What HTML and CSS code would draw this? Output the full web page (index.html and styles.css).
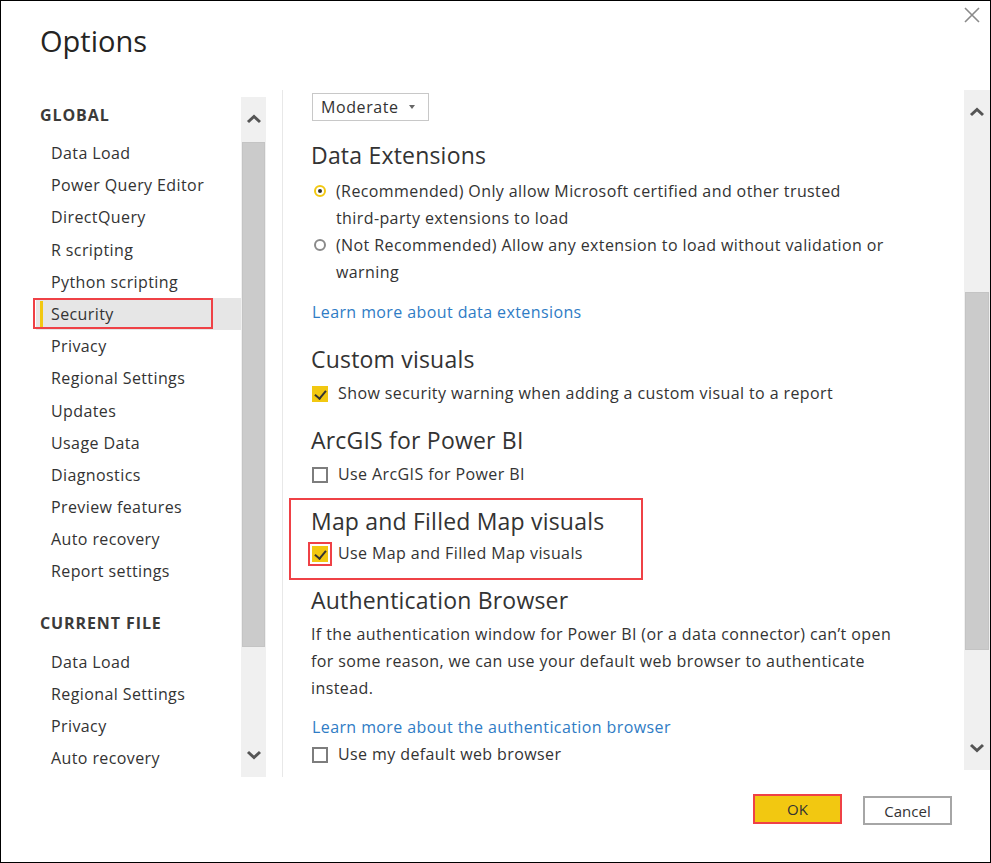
FILE: index.html
```html
<!DOCTYPE html>
<html lang="en">
<head>
<meta charset="utf-8">
<title>Options</title>
<link rel="stylesheet" href="styles.css">
</head>
<body>
<div class="dialog">
  <header class="header">
    <h1 class="title">Options</h1>
    <button class="close" aria-label="Close">
      <svg width="16" height="16" viewBox="0 0 16 16"><path d="M1 1 L15 15 M15 1 L1 15" stroke="#8a8a8a" stroke-width="1.6" fill="none"/></svg>
    </button>
  </header>

  <main class="main">
    <nav class="nav">
      <div class="nav-head first">GLOBAL</div>
      <ul class="nav-list">
        <li class="nav-item">Data Load</li>
        <li class="nav-item">Power Query Editor</li>
        <li class="nav-item">DirectQuery</li>
        <li class="nav-item">R scripting</li>
        <li class="nav-item">Python scripting</li>
        <li class="nav-item active"><span class="annot annot-nav"></span>Security</li>
        <li class="nav-item">Privacy</li>
        <li class="nav-item">Regional Settings</li>
        <li class="nav-item">Updates</li>
        <li class="nav-item">Usage Data</li>
        <li class="nav-item">Diagnostics</li>
        <li class="nav-item">Preview features</li>
        <li class="nav-item">Auto recovery</li>
        <li class="nav-item">Report settings</li>
      </ul>
      <div class="nav-head second">CURRENT FILE</div>
      <ul class="nav-list">
        <li class="nav-item">Data Load</li>
        <li class="nav-item">Regional Settings</li>
        <li class="nav-item">Privacy</li>
        <li class="nav-item">Auto recovery</li>
      </ul>
    </nav>

    <div class="scrollbar scrollbar-left">
      <div class="sb-arrow"><svg width="16" height="10" viewBox="0 0 16 10"><path d="M2 8 L8 2.5 L14 8" stroke="#555" stroke-width="3" fill="none"/></svg></div>
      <div class="sb-track"><div class="sb-thumb thumb-left"></div></div>
      <div class="sb-arrow"><svg width="16" height="10" viewBox="0 0 16 10"><path d="M2 2 L8 7.5 L14 2" stroke="#555" stroke-width="3" fill="none"/></svg></div>
    </div>

    <div class="divider"></div>

    <section class="content">
      <div class="dropdown">Moderate <span class="caret"></span></div>

      <h2 class="heading h-first">Data Extensions</h2>
      <div class="radio-row">
        <span class="radio on"></span>
        <span class="label">(Recommended) Only allow Microsoft certified and other trusted <span class="nowrap">third-party</span> extensions to load</span>
      </div>
      <div class="radio-row">
        <span class="radio"></span>
        <span class="label">(Not Recommended) Allow any extension to load without validation or warning</span>
      </div>
      <a class="link link-ext">Learn more about data extensions</a>

      <h2 class="heading">Custom visuals</h2>
      <div class="check-row"><span class="check on"></span><span class="label">Show security warning when adding a custom visual to a report</span></div>

      <h2 class="heading">ArcGIS for Power BI</h2>
      <div class="check-row"><span class="check"></span><span class="label">Use ArcGIS for Power BI</span></div>

      <div class="map-section">
        <span class="annot annot-map"></span>
        <h2 class="heading">Map and Filled Map visuals</h2>
        <div class="check-row"><span class="check on"><span class="annot annot-check"></span></span><span class="label">Use Map and Filled Map visuals</span></div>
      </div>

      <h2 class="heading">Authentication Browser</h2>
      <p class="para">If the authentication window for Power BI (or a data connector) can’t open for some reason, we can use your default web browser to authenticate instead.</p>
      <a class="link link-auth">Learn more about the authentication browser</a>
      <div class="check-row"><span class="check"></span><span class="label">Use my default web browser</span></div>
    </section>

    <div class="scrollbar scrollbar-right">
      <div class="sb-arrow"><svg width="16" height="10" viewBox="0 0 16 10"><path d="M2 8 L8 2.5 L14 8" stroke="#555" stroke-width="3" fill="none"/></svg></div>
      <div class="sb-track"><div class="sb-thumb thumb-right"></div></div>
      <div class="sb-arrow"><svg width="16" height="10" viewBox="0 0 16 10"><path d="M2 2 L8 7.5 L14 2" stroke="#555" stroke-width="3" fill="none"/></svg></div>
    </div>
  </main>

  <footer class="footer">
    <button class="btn btn-ok">OK</button>
    <button class="btn btn-cancel">Cancel</button>
  </footer>
</div>
</body>
</html>
```

FILE: styles.css
```css
* { box-sizing: border-box; }
html, body { margin: 0; padding: 0; background: #fff; }
body { font-family: "Open Sans", "Noto Sans", sans-serif; color: #333; }

.dialog {
  width: 991px;
  height: 863px;
  border: 1px solid #000;
  display: flex;
  flex-direction: column;
  overflow: hidden;
}

.header {
  height: 89px;
  display: flex;
  justify-content: space-between;
  align-items: flex-start;
  padding-left: 39px;
}
.title {
  margin: 21px 0 0;
  font-size: 29px;
  font-weight: 400;
  line-height: 38px;
  color: #252423;
}
.close {
  border: 0;
  background: none;
  padding: 0;
  margin: 5px 9px 0 0;
  width: 18px;
  height: 18px;
  display: flex;
  align-items: center;
  justify-content: center;
}

.main {
  height: 687px;
  display: flex;
  flex-direction: row;
}

/* nav */
.nav {
  width: 205px;
  margin-left: 35px;
  font-size: 16px;
  letter-spacing: 0.4px;
}
.nav-head {
  height: 32px;
  line-height: 32px;
  padding-left: 4px;
  font-weight: 700;
  color: #3b3a39;
  letter-spacing: 0.9px;
}
.nav-head.first { margin-top: 9px; margin-bottom: 6px; }
.nav-head.second { margin-top: 19px; margin-bottom: 7px; }
.nav-list { list-style: none; margin: 0; padding: 0; }
.nav-item {
  position: relative;
  height: 32.2px;
  line-height: 32px;
  padding-left: 15px;
  color: #333;
  white-space: nowrap;
}
.nav-item.active {
  background: #e6e6e6;
}
.nav-item.active::before {
  content: "";
  position: absolute;
  left: 4px;
  top: 3px;
  bottom: 3px;
  width: 3px;
  background: #f2c811;
}

/* annotations */
.annot {
  position: absolute;
  border: 2px solid #ef4146;
  pointer-events: none;
}
.annot-nav { left: -3px; top: 0; width: 180px; height: 31px; }
.annot-map { left: -22px; top: -8px; width: 354px; height: 82px; }
.annot-check { left: -4px; top: -4px; width: 24px; height: 24px; }

/* scrollbars */
.scrollbar {
  width: 25px;
  background: #f0f0f0;
  display: flex;
  flex-direction: column;
}
.scrollbar-left { margin-top: 7px; height: 680px; }
.scrollbar-right { height: 680px; width: 26px; }
.sb-arrow {
  height: 44px;
  display: flex;
  align-items: center;
  justify-content: center;
}
.sb-track { flex: 1; position: relative; }
.sb-thumb {
  position: absolute;
  left: 1px;
  right: 1px;
  background: #cbcbcb;
  border: 1px solid #c4c4c4;
}
.thumb-left { top: 1px; height: 505px; }
.thumb-right { top: 158px; height: 358px; }

.divider {
  width: 1px;
  background: #e8e8e8;
  margin-left: 16px;
}

/* content */
.content {
  flex: 1;
  padding: 3px 0 0 28px;
  font-size: 16px;
  letter-spacing: 0.4px;
  overflow: hidden;
}
.dropdown {
  width: 117px;
  height: 28px;
  border: 1px solid #c8c8c8;
  padding-left: 8px;
  line-height: 26px;
  display: flex;
  align-items: center;
  gap: 6px;
  margin-left: 1px;
  color: #333;
  letter-spacing: 0.6px;
}
.caret {
  width: 0; height: 0;
  border-left: 3.5px solid transparent;
  border-right: 3.5px solid transparent;
  border-top: 4px solid #666;
  margin-left: 4px;
}
.heading {
  margin: 18px 0 0;
  font-size: 23px;
  font-weight: 400;
  line-height: 30px;
  color: #333;
  letter-spacing: 0.2px;
}
.h-first { margin-top: 19px; }

.radio-row {
  display: flex;
  align-items: flex-start;
  line-height: 27px;
}
.h-first + .radio-row { margin-top: 8px; }
.radio {
  flex: none;
  width: 12px;
  height: 12px;
  border-radius: 50%;
  border: 2px solid #8a8a8a;
  margin: 7px 10px 0 3px;
  position: relative;
}
.radio.on { border-color: #f2c811; }
.radio.on::after {
  content: "";
  position: absolute;
  left: 2px; top: 2px;
  width: 4px; height: 4px;
  border-radius: 50%;
  background: #333;
}
.radio-row .label { display: block; max-width: 560px; }
.nowrap { white-space: nowrap; }

.link {
  display: block;
  color: #2f7cc5;
  line-height: 27px;
  margin-left: 1px;
}
.link-ext { margin-top: 13px; }
.link-auth { margin-top: 12px; }

.check-row {
  display: flex;
  align-items: center;
  line-height: 27px;
  margin-top: 6px;
}
.check {
  flex: none;
  position: relative;
  width: 16px;
  height: 16px;
  border: 2px solid #7d7d7d;
  margin: 0 10px 0 1px;
  background: #fff;
}
.check.on {
  border: 0;
  background: #f2c811;
}
.check.on::after {
  content: "";
  position: absolute;
  left: 5px;
  top: 2px;
  width: 5px;
  height: 9px;
  border-right: 2px solid #333;
  border-bottom: 2px solid #333;
  transform: rotate(40deg);
}
.map-section { position: relative; }
.map-section .check-row { margin-top: 4px; }

.para {
  margin: 6px 0 0;
  line-height: 27px;
  max-width: 595px;
}
.link-auth + .check-row { margin-top: 0; }

/* footer */
.footer {
  flex: 1;
  display: flex;
  justify-content: flex-end;
  align-items: flex-start;
  gap: 21px;
  padding: 17px 38px 0 0;
}
.btn {
  font-family: "Open Sans", "Noto Sans", sans-serif;
  font-size: 15px;
  color: #333;
  height: 30px;
  width: 89px;
  padding: 0;
  background: #fff;
}
.btn-ok {
  background: #f2c811;
  border: 2px solid #ef4146;
}
.btn-cancel {
  border: 2px solid #a6a6a6;
  margin-top: 2px;
  height: 29px;
}
```
